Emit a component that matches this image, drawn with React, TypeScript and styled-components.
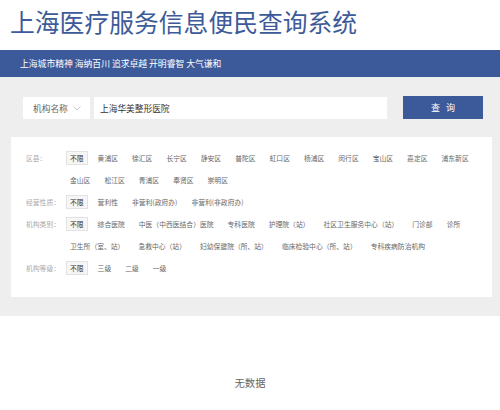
import React from 'react';
import styled, { createGlobalStyle } from 'styled-components';

const GlobalStyle = createGlobalStyle`
  body {
    margin: 0;
    background: #fff;
    font-family: "Noto Sans CJK SC", "Noto Sans", sans-serif;
  }
`;

const filters = [
  {
    label: '区县：',
    options: ['不限', '黄浦区', '徐汇区', '长宁区', '静安区', '普陀区', '虹口区', '杨浦区', '闵行区', '宝山区', '嘉定区', '浦东新区', '金山区', '松江区', '青浦区', '奉贤区', '崇明区'],
  },
  {
    label: '经营性质：',
    options: ['不限', '营利性', '非营利(政府办)', '非营利(非政府办)'],
  },
  {
    label: '机构类别：',
    options: ['不限', '综合医院', '中医（中西医结合）医院', '专科医院', '护理院（站）', '社区卫生服务中心（站）', '门诊部', '诊所', '卫生所（室、站）', '急救中心（站）', '妇幼保健院（所、站）', '临床检验中心（所、站）', '专科疾病防治机构'],
  },
  {
    label: '机构等级：',
    options: ['不限', '三级', '二级', '一级'],
  },
];

const App = () => {
  return (
    <>
      <GlobalStyle />
      <Title>上海医疗服务信息便民查询系统</Title>
      <NavBar>上海城市精神 海纳百川 追求卓越 开明睿智 大气谦和</NavBar>
      <SearchSection>
        <SearchRow>
          <SelectBox>
            <span>机构名称</span>
            <svg width="8" height="5" viewBox="0 0 8 5">
              <polyline points="0.5,0.5 4,4 7.5,0.5" fill="none" stroke="#bbb" strokeWidth="0.8" />
            </svg>
          </SelectBox>
          <SearchInput defaultValue="上海华美整形医院" />
          <SearchButton>查 询</SearchButton>
        </SearchRow>
        <FilterPanel>
          {filters.map((f) => (
            <FilterRow key={f.label}>
              <FilterLabel>{f.label}</FilterLabel>
              <Options>
                {f.options.map((o, i) => (
                  <Option key={o} $active={i === 0}>{o}</Option>
                ))}
              </Options>
            </FilterRow>
          ))}
        </FilterPanel>
      </SearchSection>
      <Empty>无数据</Empty>
    </>
  );
};

export default App;

const Title = styled.h1`
  margin: 0;
  height: 50px;
  padding-left: 10px;
  font-size: 24.8px;
  font-weight: 400;
  line-height: 42px;
  color: #3d5b99;
  white-space: nowrap;
`;

const NavBar = styled.div`
  height: 27px;
  padding-left: 20px;
  background: #3c5a9a;
  color: #fff;
  font-size: 8.8px;
  line-height: 27px;
  white-space: pre;
`;

const SearchSection = styled.div`
  background: #eeeeee;
  padding: 20px 8px 19px 11px;
`;

const SearchRow = styled.div`
  display: flex;
  align-items: stretch;
  height: 22px;
  padding: 0 9px 0 12px;
`;

const SelectBox = styled.div`
  width: 67px;
  box-sizing: border-box;
  display: flex;
  align-items: center;
  gap: 5px;
  padding-left: 10px;
  background: #fff;
  color: #666;
  font-size: 8.7px;
`;

const SearchInput = styled.input`
  flex: 1;
  margin-left: 4px;
  border: none;
  outline: none;
  padding: 0 6px;
  background: #fff;
  color: #333;
  font-family: inherit;
  font-size: 8.7px;
`;

const SearchButton = styled.button`
  width: 80px;
  margin-left: 16px;
  margin-top: -1px;
  border: none;
  background: #3c5a9a;
  color: #fff;
  font-family: inherit;
  font-size: 9px;
  letter-spacing: 2px;
  text-indent: 2px;
  cursor: pointer;
`;

const FilterPanel = styled.div`
  margin-top: 18px;
  background: #fff;
  padding: 14px 15px 22px 15px;
`;

const FilterRow = styled.div`
  display: flex;
  align-items: flex-start;
  & + & {
    margin-top: 8px;
  }
`;

const FilterLabel = styled.div`
  width: 40px;
  flex-shrink: 0;
  font-size: 6.8px;
  line-height: 14px;
  color: #aaa;
  white-space: nowrap;
`;

const Options = styled.div`
  flex: 1;
  display: flex;
  flex-wrap: wrap;
  row-gap: 8px;
  column-gap: 6px;
`;

const Option = styled.span<{ $active?: boolean }>`
  padding: 0 3px;
  line-height: 12px;
  font-size: 6.8px;
  white-space: nowrap;
  border: 1px solid ${(p) => (p.$active ? '#e2e2e2' : 'transparent')};
  background: ${(p) => (p.$active ? '#f6f6f6' : 'transparent')};
  color: ${(p) => (p.$active ? '#333' : '#666')};
  cursor: pointer;
`;

const Empty = styled.div`
  padding-top: 60px;
  text-align: center;
  font-size: 10.3px;
  line-height: 14px;
  color: #666;
`;
